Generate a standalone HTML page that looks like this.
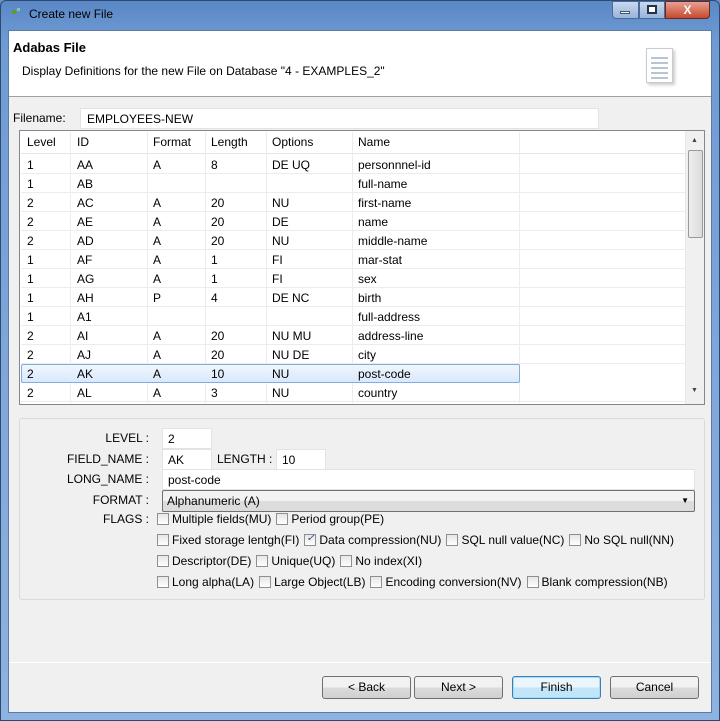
<html><head><style>
*{box-sizing:border-box;margin:0;padding:0}
body{width:720px;height:721px;background:#6d93c6;font-family:"Liberation Sans",sans-serif;font-size:12px;color:#000;position:relative;overflow:hidden}
.a{position:absolute}
.frame{left:0;top:0;width:720px;height:721px;background:linear-gradient(#5a87c6,#6f9bd3 40px,#8fb3e0);border-radius:6px 6px 0 0;border:1px solid #2d4a73}
.client{left:8px;top:30px;width:704px;height:683px;background:#f0f0f0;border:1px solid #5a7aa4}
.hdr{left:0;top:0;width:702px;height:66px;background:#fff;border-bottom:1px solid #a0a0a0}
.box{background:#fff;border:1px solid #abadb3}
.row{position:absolute;left:1px;height:19px;width:665px;border-bottom:1px solid #ececec}
.row span,.hr span{position:absolute;top:3px}
.hr{position:absolute;left:1px;top:1px;width:665px;height:22px;border-bottom:1px solid #e5e5e5}
.vl{position:absolute;top:1px;width:1px;height:271px;background:#ececec}
.lbl{position:absolute;text-align:right;width:129px;left:0}
.cb{display:inline-block;width:12px;height:12px;border:1px solid #8e8f8f;background:linear-gradient(#e6e6e6,#fff);vertical-align:-2px;margin-right:3px;position:relative}
.fl{position:absolute;white-space:nowrap;font-size:12px}
.fl span{margin-right:5px}
.btn{position:absolute;top:676px;width:89px;height:23px;border:1px solid #707070;border-radius:3px;background:linear-gradient(#f2f2f2 50%,#dcdcdc 50%,#d0d0d0);text-align:center;line-height:21px}
</style></head><body>
<div class="a frame"></div>
<div class="a" style="left:12px;top:10px;width:4px;height:4px;background:#5a9a3a"></div>
<div class="a" style="left:17px;top:8px;width:3px;height:3px;background:#8c8"></div>
<div class="a" style="left:29px;top:7px;color:#000;font-size:12px">Create new File</div>
<div class="a" style="left:612px;top:1px;width:27px;height:18px;border:1px solid #4a6a98;border-radius:0 0 0 4px;background:linear-gradient(#c9d9ee,#98b4da)"></div>
<div class="a" style="left:639px;top:1px;width:26px;height:18px;border:1px solid #4a6a98;background:linear-gradient(#c9d9ee,#98b4da)"></div>
<div class="a" style="left:665px;top:1px;width:45px;height:18px;border:1px solid #6a2a20;border-radius:0 0 4px 0;background:linear-gradient(#e8a090,#c74a30);color:#fff;text-align:center;font-weight:bold;font-size:12px;line-height:16px">X</div>
<div class="a" style="left:620px;top:11px;width:10px;height:3px;background:#fff;border:1px solid #456"></div>
<div class="a" style="left:647px;top:5px;width:10px;height:9px;border:2px solid #234;background:#fff"></div>
<div class="a client">
 <div class="a hdr">
  <div class="a" style="left:4px;top:9px;font-weight:bold;font-size:13px">Adabas File</div>
  <div class="a" style="left:13px;top:33px">Display Definitions for the new File on Database "4 - EXAMPLES_2"</div>
  <div class="a" style="left:637px;top:17px;width:27px;height:35px;background:#fff;border:1px solid #c8ccd2;box-shadow:2px 2px 3px #ccc">
   <div style="margin:8px 4px;height:2px;background:#b8c4d2;box-shadow:0 5px #b8c4d2,0 10px #b8c4d2,0 15px #b8c4d2,0 20px #b8c4d2"></div></div>
 </div>
 <div class="a" style="left:4px;top:80px">Filename:</div>
 <div class="a box" style="left:71px;top:77px;width:519px;height:21px;padding:3px 6px;border-color:#e3e3e3">EMPLOYEES-NEW</div>
 <div class="a box" style="left:10px;top:99px;width:686px;height:275px;border-color:#828790">
  <div class="hr"><span style="left:6px">Level</span><span style="left:56px">ID</span><span style="left:132px">Format</span><span style="left:190px">Length</span><span style="left:251px">Options</span><span style="left:337px">Name</span></div>
  <div class="vl" style="left:50px"></div><div class="vl" style="left:127px"></div><div class="vl" style="left:185px"></div><div class="vl" style="left:246px"></div><div class="vl" style="left:332px"></div><div class="vl" style="left:499px"></div>
  <div id="rows"></div>
  <div class="a" style="left:665px;top:0;width:19px;height:273px;background:#f0f0f0;border-left:1px solid #e8e8e8">
   <div class="a" style="left:5px;top:6px;font-size:7px;color:#444">▲</div>
   <div class="a" style="left:2px;top:19px;width:15px;height:88px;border:1px solid #9a9a9a;border-radius:2px;background:linear-gradient(90deg,#eee,#dcdcdc)"></div>
   <div class="a" style="left:5px;top:256px;font-size:7px;color:#444">▼</div>
  </div>
 </div>
 <div class="a" style="left:10px;top:387px;width:686px;height:182px;border:1px solid #dadada;border-radius:3px;background:#f0f0f0">
  <div class="lbl" style="top:12px">LEVEL :</div>
  <div class="a box" style="left:142px;top:9px;width:50px;height:21px;padding:3px 5px;border-color:#e3e3e3">2</div>
  <div class="lbl" style="top:33px">FIELD_NAME :</div>
  <div class="a box" style="left:142px;top:30px;width:50px;height:21px;padding:3px 5px;border-color:#e3e3e3">AK</div>
  <div class="a" style="left:197px;top:33px">LENGTH :</div>
  <div class="a box" style="left:256px;top:30px;width:50px;height:21px;padding:3px 5px;border-color:#e3e3e3">10</div>
  <div class="lbl" style="top:53px">LONG_NAME :</div>
  <div class="a box" style="left:142px;top:50px;width:533px;height:21px;padding:3px 5px;border-color:#e3e3e3">post-code</div>
  <div class="lbl" style="top:74px">FORMAT :</div>
  <div class="a" style="left:142px;top:71px;width:533px;height:22px;padding:3px 4px;border:1px solid #707070;border-radius:2px;background:linear-gradient(#f2f2f2 50%,#dcdcdc 50%)">Alphanumeric (A)<span style="position:absolute;right:5px;top:5px;font-size:8px">▼</span></div>
  <div class="lbl" style="top:93px">FLAGS :</div>
  <div class="fl" style="left:137px;top:93px"><span><i class="cb"></i>Multiple fields(MU)</span><span><i class="cb"></i>Period group(PE)</span></div>
  <div class="fl" style="left:137px;top:114px"><span><i class="cb"></i>Fixed storage lentgh(FI)</span><span><i class="cb"><b style="position:absolute;left:1px;top:-2px;font-size:10px;color:#2a4a8a;font-weight:normal">✓</b></i>Data compression(NU)</span><span><i class="cb"></i>SQL null value(NC)</span><span><i class="cb"></i>No SQL null(NN)</span></div>
  <div class="fl" style="left:137px;top:135px"><span><i class="cb"></i>Descriptor(DE)</span><span><i class="cb"></i>Unique(UQ)</span><span><i class="cb"></i>No index(XI)</span></div>
  <div class="fl" style="left:137px;top:156px"><span><i class="cb"></i>Long alpha(LA)</span><span><i class="cb"></i>Large Object(LB)</span><span><i class="cb"></i>Encoding conversion(NV)</span><span><i class="cb"></i>Blank compression(NB)</span></div>
 </div>
 <div class="a" style="left:0;top:631px;width:702px;height:1px;background:#a0a0a0;border-bottom:1px solid #fff"></div>
</div>
<div class="btn" style="left:322px">&lt; Back</div>
<div class="btn" style="left:414px">Next &gt;</div>
<div class="btn" style="left:512px;border-color:#3c7fb1;background:linear-gradient(#eaf6fd 50%,#c4e5f6 50%,#bee6fd);box-shadow:inset 0 0 0 1px #a6dcf8">Finish</div>
<div class="btn" style="left:610px">Cancel</div>
<script>
var d=[["1","AA","A","8","DE UQ","personnnel-id"],["1","AB","","","","full-name"],["2","AC","A","20","NU","first-name"],["2","AE","A","20","DE","name"],["2","AD","A","20","NU","middle-name"],["1","AF","A","1","FI","mar-stat"],["1","AG","A","1","FI","sex"],["1","AH","P","4","DE NC","birth"],["1","A1","","","","full-address"],["2","AI","A","20","NU MU","address-line"],["2","AJ","A","20","NU DE","city"],["2","AK","A","10","NU","post-code"],["2","AL","A","3","NU","country"]];
var x=[6,56,132,190,251,337],h="";
d.forEach(function(r,i){var s=i==11?"background:linear-gradient(#f1f7fe,#d8e8fb);box-shadow:inset 0 0 0 1px #84acdd;border-bottom:none;width:499px;border-radius:2px;":"";
h+='<div class="row" style="top:'+(24+i*19)+'px;'+s+'">';r.forEach(function(c,j){h+='<span style="left:'+x[j]+'px">'+c+'</span>'});h+='</div>'});
document.getElementById('rows').innerHTML=h;
</script>
</body></html>
